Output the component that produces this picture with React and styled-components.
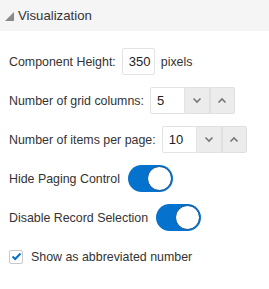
import React, { useState } from 'react';
import styled, { createGlobalStyle } from 'styled-components';

const GlobalStyle = createGlobalStyle`
  body {
    margin: 0;
    background: #fff;
    font-family: "Liberation Sans", Arial, sans-serif;
    color: #333;
  }
`;

const Header = styled.header`
  display: flex;
  align-items: center;
  gap: 4px;
  height: 31px;
  padding-left: 5px;
  background: #f5f5f5;
  font-size: 13.2px;
  color: #333;
`;

const Caret = styled.span`
  width: 0;
  height: 0;
  border-left: 9px solid transparent;
  border-bottom: 9px solid #8a8a8a;
  margin-top: 1px;
`;

const Body = styled.div`
  display: flex;
  flex-direction: column;
  gap: 12px;
  padding: 17px 9px 0;
  font-size: 12.4px;
`;

const Row = styled.div`
  display: flex;
  align-items: center;
  height: 27px;
  gap: ${(p) => p.$gap || 6}px;
`;

const Field = styled.div`
  box-sizing: border-box;
  width: ${(p) => p.$width}px;
  height: 27px;
  padding-left: 6px;
  display: flex;
  align-items: center;
  border: 1px solid #e3e3e3;
  border-radius: ${(p) => (p.$alone ? '2px' : '2px 0 0 2px')};
  background: #fff;
  font-size: 13px;
  color: #222;
`;

const Stepper = styled.div`
  display: flex;
  align-items: center;
`;

const StepButton = styled.button`
  box-sizing: border-box;
  width: 25px;
  height: 27px;
  padding: 0;
  display: flex;
  align-items: center;
  justify-content: center;
  background: #ececec;
  border: 1px solid #e0e0e0;
  border-left: ${(p) => (p.$first ? 'none' : '1px solid #e0e0e0')};
  border-radius: ${(p) => (p.$last ? '0 2px 2px 0' : '0')};
`;

const Track = styled.div`
  box-sizing: border-box;
  position: relative;
  flex: none;
  width: 45px;
  height: 27px;
  border-radius: 14px;
  background: #0572ce;
  cursor: pointer;
`;

const Knob = styled.span`
  position: absolute;
  top: 1px;
  right: 1px;
  box-sizing: border-box;
  width: 25px;
  height: 25px;
  border-radius: 50%;
  background: #fff;
  border: 1px solid #0a4f95;
`;

const CheckRow = styled.label`
  display: flex;
  align-items: center;
  gap: 8px;
  height: 27px;
`;

const Box = styled.span`
  box-sizing: border-box;
  width: 14px;
  height: 14px;
  display: flex;
  align-items: center;
  justify-content: center;
  border: 1px solid #c8c8c8;
  border-radius: 2px;
  background: #fff;
`;

function Chevron({ up }) {
  return (
    <svg width="10" height="7" viewBox="0 0 10 7">
      <path
        d={up ? 'M1.5 5.5 L5 2 L8.5 5.5' : 'M1.5 1.5 L5 5 L8.5 1.5'}
        fill="none"
        stroke="#777"
        strokeWidth="1.6"
      />
    </svg>
  );
}

function Spinner({ value, width }) {
  return (
    <Stepper>
      <Field $width={width}>{value}</Field>
      <StepButton $first><Chevron /></StepButton>
      <StepButton $last><Chevron up /></StepButton>
    </Stepper>
  );
}

function Toggle() {
  const [on, setOn] = useState(true);
  return (
    <Track role="switch" aria-checked={on} onClick={() => setOn(!on)}>
      <Knob style={on ? {} : { right: 'auto', left: 1 }} />
    </Track>
  );
}

export default function App() {
  return (
    <>
      <GlobalStyle />
      <Header>
        <Caret />
        <span>Visualization</span>
      </Header>
      <Body>
        <Row>
          <span>Component Height:</span>
          <Field $width={33} $alone>350</Field>
          <span>pixels</span>
        </Row>
        <Row>
          <span>Number of grid columns:</span>
          <Spinner value="5" width={35} />
        </Row>
        <Row>
          <span>Number of items per page:</span>
          <Spinner value="10" width={35} />
        </Row>
        <Row $gap={8}>
          <span>Hide Paging Control</span>
          <Toggle />
        </Row>
        <Row $gap={8}>
          <span>Disable Record Selection</span>
          <Toggle />
        </Row>
        <CheckRow>
          <Box>
            <svg width="11" height="9" viewBox="0 0 11 9">
              <path d="M1.5 4.5 L4.2 7 L9.5 1.5" fill="none" stroke="#0572ce" strokeWidth="2" />
            </svg>
          </Box>
          <span>Show as abbreviated number</span>
        </CheckRow>
      </Body>
    </>
  );
}
